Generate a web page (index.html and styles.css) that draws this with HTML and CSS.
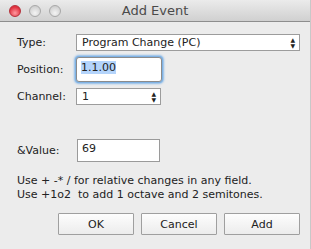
FILE: index.html
```html
<!DOCTYPE html>
<html lang="en">
<head>
    <meta charset="UTF-8">
    <title>Add Event</title>
    <link rel="stylesheet" href="styles.css">
</head>
<body>
<div class="m-window">
    <div class="titlebar">
        <div class="lights">
            <span class="light close"></span>
            <span class="light"></span>
            <span class="light"></span>
        </div>
        <div class="title">Add Event</div>
    </div>

    <div class="content">
        <div class="row row-type">
            <label class="lbl">Type:</label>
            <div class="select wide">
                <span>Program Change (PC)</span>
                <span class="arrows">&#9650;<br>&#9660;</span>
            </div>
        </div>
        <div class="row row-pos">
            <label class="lbl">Position:</label>
            <div class="input focus"><span class="sel">1.1.00</span></div>
        </div>
        <div class="row row-chan">
            <label class="lbl">Channel:</label>
            <div class="select narrow">
                <span>1</span>
                <span class="arrows">&#9650;<br>&#9660;</span>
            </div>
        </div>
        <div class="row row-value">
            <label class="lbl">&amp;Value:</label>
            <div class="input plain">69</div>
        </div>

        <p class="hint">Use + -* / for relative changes in any field.<br>Use +1o2&nbsp; to add 1 octave and 2 semitones.</p>

        <div class="buttons">
            <button class="btn">OK</button>
            <button class="btn">Cancel</button>
            <button class="btn">Add</button>
        </div>
    </div>
</div>
</body>
</html>
```

FILE: styles.css
```css
html,body{
  height: 100%;
  width: 100%;
  padding: 0;
  margin: 0;
}
body{
    font-family: "DejaVu Sans", "Liberation Sans", sans-serif;
    font-size: 11px;
    color: #222;
    background: #ececec;
}
.m-window {
    width: 311px;
    height: 249px;
    background: #ececec;
    box-sizing: border-box;
    border-right: 1px solid #c8c8c8;
    overflow: hidden;
}

/* title bar */
.titlebar {
    height: 21px;
    position: relative;
    background: linear-gradient(#ebebeb, #d0d0d0);
    border-bottom: 1px solid #8e8e8e;
    text-align: center;
}
.titlebar .title {
    line-height: 22px;
    font-size: 13px;
    color: #4a4a4a;
}
.lights {
    position: absolute;
    left: 9px;
    top: 5px;
    display: flex;
    gap: 8px;
}
.light {
    width: 12px;
    height: 12px;
    border-radius: 50%;
    box-sizing: border-box;
    border: 1px solid #a8a8a8;
    background: radial-gradient(circle at 50% 70%, #f4f4f4, #c4c4c4);
}
.light.close {
    border-color: #b5303a;
    background: radial-gradient(circle at 50% 70%, #ff9aa0, #e0303d 70%);
}

/* form */
.content {
    padding: 12px 10px 0 17px;
}
.row {
    display: flex;
    align-items: center;
}
.lbl {
    width: 59px;
    flex: none;
}
.row-pos { margin-top: 6px; }
.row-chan { margin-top: 6px; }
.row-value { margin-top: 34px; }

.select {
    height: 17px;
    box-sizing: border-box;
    border: 1px solid #9c9c9c;
    background: #fff;
    display: flex;
    align-items: center;
    justify-content: space-between;
    padding: 0 4px 0 5px;
}
.select.wide { width: 225px; }
.select.narrow { width: 85px; }
.select .arrows {
    font-size: 6px;
    line-height: 6px;
    color: #222;
    text-align: center;
}

.input {
    box-sizing: border-box;
    background: #fff;
    height: 23px;
    padding: 2px 4px;
}
.input.focus {
    width: 86px;
    height: 25px;
    border: 1px solid #8b8b8b;
    border-radius: 3px;
    box-shadow: 0 0 0 1px #7fb2e4, 0 0 2px 2px #8dbbe8;
    padding: 3px 4px;
}
.input .sel {
    background: #b4d4fb;
}
.input.plain {
    margin-left: 1px;
    width: 83px;
    border: 1px solid #9a9a9a;
}

.hint {
    margin: 12px 0 0;
    line-height: 14px;
}

.buttons {
    display: flex;
    justify-content: flex-end;
    gap: 7px;
    margin-top: 11px;
}
.btn {
    width: 76px;
    height: 22px;
    font-family: inherit;
    font-size: 11px;
    color: #222;
    border: 1px solid #9f9f9f;
    border-radius: 1px;
    background: linear-gradient(#fdfdfd, #ececec);
    padding: 0;
}
```
